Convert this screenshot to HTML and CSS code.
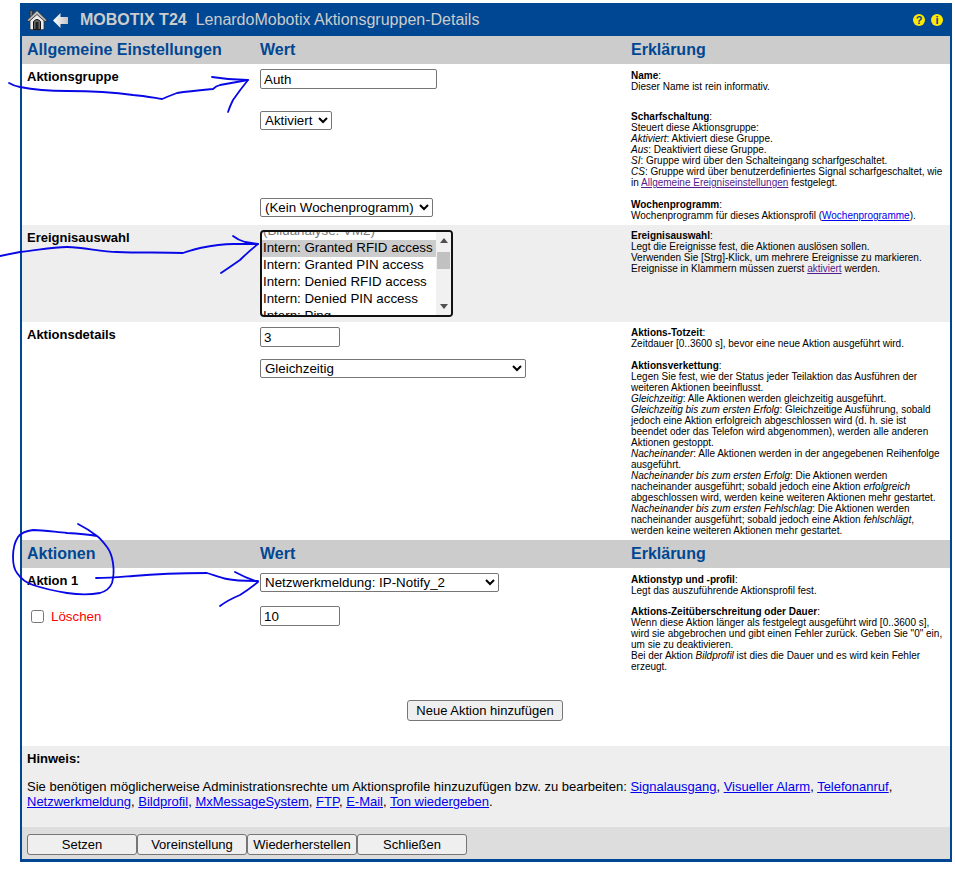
FILE: index.html
```html
<!DOCTYPE html>
<html lang="de">
<head>
<meta charset="utf-8">
<title>MOBOTIX T24 Aktionsgruppen-Details</title>
<link rel="stylesheet" href="styles.css">
</head>
<body>
<div class="page">
  <main class="frame">
    <header class="topbar">
      <svg class="home" viewBox="0 0 22 22" width="22" height="22">
        <rect x="4" y="1.500" width="2.500" height="6" fill="#777" stroke="#222" stroke-width="0.600"/>
        <path d="M4 11 L11 4.500 L18 11 V20.500 Q11 21.500 4 20.500 Z" fill="#ececec" stroke="#333" stroke-width="0.800"/>
        <path d="M0.800 11.500 L11 1.500 L21.200 11.500 L19 12.500 L11 5.500 L3 12.500 Z" fill="#bdbdbd" stroke="#222" stroke-width="0.800"/>
        <path d="M7.500 20.500 V12.500 Q11 8.500 14.500 12.500 V20.500 Z" fill="#666" stroke="#111" stroke-width="1"/>
        <rect x="9.500" y="13" width="3" height="7.500" fill="#222"/>
      </svg>
      <svg class="back" viewBox="0 0 17 17" width="17" height="17">
        <defs><linearGradient id="backfill" x1="0" x2="1" y1="0" y2="0"><stop offset="0" stop-color="#fff"/><stop offset="1" stop-color="#c4c4c4"/></linearGradient></defs>
        <path d="M1 8.500 L8.500 1 V5 H16 V12 H8.500 V16 Z" fill="url(#backfill)"/>
      </svg>
      <span class="brand">MOBOTIX T24</span>
      <span class="pagetitle">LenardoMobotix Aktionsgruppen-Details</span>
      <span class="topicons">
        <span class="badge">?</span>
        <span class="badge">i</span>
      </span>
    </header>

    <div class="row head"><div>Allgemeine Einstellungen</div><div>Wert</div><div>Erklärung</div></div>

    <div class="row r-name">
      <div class="label">Aktionsgruppe</div>
      <div><input class="field f-name" type="text" value="Auth"></div>
      <div class="ex"><b>Name</b>:<br>Dieser Name ist rein informativ.</div>
    </div>
    <div class="row r-arm">
      <div></div>
      <div><select class="field s-arm"><option>Aktiviert</option></select></div>
      <div class="ex"><b>Scharfschaltung</b>:<br>Steuert diese Aktionsgruppe:<br><i>Aktiviert</i>: Aktiviert diese Gruppe.<br><i>Aus</i>: Deaktiviert diese Gruppe.<br><i>SI</i>: Gruppe wird über den Schalteingang scharfgeschaltet.<br><i>CS</i>: Gruppe wird über benutzerdefiniertes Signal scharfgeschaltet, wie in <a class="seen" href="#">Allgemeine Ereigniseinstellungen</a> festgelegt.</div>
    </div>
    <div class="row r-week">
      <div></div>
      <div><select class="field s-week"><option>(Kein Wochenprogramm)</option></select></div>
      <div class="ex"><b>Wochenprogramm</b>:<br>Wochenprogramm für dieses Aktionsprofil (<a href="#">Wochenprogramme</a>).</div>
    </div>

    <div class="row r-events">
      <div class="label">Ereignisauswahl</div>
      <div>
        <div class="listbox">
          <div class="options">
            <div class="opt muted">(Bildanalyse: VM2)</div>
            <div class="opt sel">Intern: Granted RFID access</div>
            <div class="opt">Intern: Granted PIN access</div>
            <div class="opt">Intern: Denied RFID access</div>
            <div class="opt">Intern: Denied PIN access</div>
            <div class="opt">Intern: Ping</div>
          </div>
          <div class="scroll">
            <span class="up"></span>
            <span class="thumb"></span>
            <span class="down"></span>
          </div>
        </div>
      </div>
      <div class="ex"><b>Ereignisauswahl</b>:<br>Legt die Ereignisse fest, die Aktionen auslösen sollen.<br>Verwenden Sie [Strg]-Klick, um mehrere Ereignisse zu markieren.<br>Ereignisse in Klammern müssen zuerst <a class="seen" href="#">aktiviert</a> werden.</div>
    </div>

    <div class="row r-details">
      <div class="label">Aktionsdetails</div>
      <div class="stack">
        <input class="field f-num" type="text" value="3">
        <select class="field s-chain"><option>Gleichzeitig</option></select>
      </div>
      <div class="ex">
        <p><b>Aktions-Totzeit</b>:<br>Zeitdauer [0..3600 s], bevor eine neue Aktion ausgeführt wird.</p>
        <p><b>Aktionsverkettung</b>:<br>Legen Sie fest, wie der Status jeder Teilaktion das Ausführen der weiteren Aktionen beeinflusst.<br><i>Gleichzeitig</i>: Alle Aktionen werden gleichzeitig ausgeführt.<br><i>Gleichzeitig bis zum ersten Erfolg</i>: Gleichzeitige Ausführung, sobald jedoch eine Aktion erfolgreich abgeschlossen wird (d. h. sie ist beendet oder das Telefon wird abgenommen), werden alle anderen Aktionen gestoppt.<br><i>Nacheinander</i>: Alle Aktionen werden in der angegebenen Reihenfolge ausgeführt.<br><i>Nacheinander bis zum ersten Erfolg</i>: Die Aktionen werden nacheinander ausgeführt; sobald jedoch eine Aktion <i>erfolgreich</i> abgeschlossen wird, werden keine weiteren Aktionen mehr gestartet.<br><i>Nacheinander bis zum ersten Fehlschlag</i>: Die Aktionen werden nacheinander ausgeführt; sobald jedoch eine Aktion <i>fehlschlägt</i>, werden keine weiteren Aktionen mehr gestartet.</p>
      </div>
    </div>

    <div class="row head"><div>Aktionen</div><div>Wert</div><div>Erklärung</div></div>

    <div class="row r-action">
      <div class="label">Aktion 1</div>
      <div><select class="field s-action"><option>Netzwerkmeldung: IP-Notify_2</option></select></div>
      <div class="ex"><b>Aktionstyp und -profil</b>:<br>Legt das auszuführende Aktionsprofil fest.</div>
    </div>
    <div class="row r-timeout">
      <label class="delete"><input class="check" type="checkbox"><span>Löschen</span></label>
      <div><input class="field f-num" type="text" value="10"></div>
      <div class="ex"><b>Aktions-Zeitüberschreitung oder Dauer</b>:<br>Wenn diese Aktion länger als festgelegt ausgeführt wird [0..3600 s], wird sie abgebrochen und gibt einen Fehler zurück. Geben Sie "0" ein, um sie zu deaktivieren.<br>Bei der Aktion <i>Bildprofil</i> ist dies die Dauer und es wird kein Fehler erzeugt.</div>
    </div>

    <div class="addrow"><button class="btn add" type="button">Neue Aktion hinzufügen</button></div>

    <section class="note">
      <p class="note-title">Hinweis:</p>
      <p>Sie benötigen möglicherweise Administrationsrechte um Aktionsprofile hinzuzufügen bzw. zu bearbeiten: <a href="#">Signalausgang</a>, <a href="#">Visueller Alarm</a>, <a href="#">Telefonanruf</a>, <a href="#">Netzwerkmeldung</a>, <a href="#">Bildprofil</a>, <a href="#">MxMessageSystem</a>, <a href="#">FTP</a>, <a href="#">E-Mail</a>, <a href="#">Ton wiedergeben</a>.</p>
    </section>

    <footer class="footer">
      <button class="btn foot" type="button">Setzen</button>
      <button class="btn foot" type="button">Voreinstellung</button>
      <button class="btn foot" type="button">Wiederherstellen</button>
      <button class="btn foot" type="button">Schließen</button>
    </footer>
  </main>

  <svg class="ink" viewBox="0 0 955 869" width="955" height="869" fill="none" stroke="#0808e6" stroke-width="1.800" stroke-linecap="round" stroke-linejoin="round">
    <path d="M9 83 Q14 86 20 87 C35 90 50 91 67 91 C90 91 112 92 133 95 C145 96 155 98 162 99 C167 97 171 95 177 93 C190 91 202 90 213 89 Q216 86 220 85 L248 80"/>
    <path d="M212 77 Q230 80 248 80 Q240 90 233 100 Q230 106 228 112"/>
    <path d="M0 256 L20 252 C35 251 50 247 67 247 C85 247 100 252 117 252 C140 253 165 252 183 253 C190 251 195 249 200 248 C215 245 225 244 233 244 L258 244"/>
    <path d="M233 236 Q238 240 245 242 L258 244 Q248 252 240 260 Q230 267 221 273"/>
    <path d="M78 524 Q88 529 97 536 Q85 534 67 533 C55 532 44 530 33 530 C25 531 21 533 18 537 C14 543 13 550 13 557 C13 564 14 569 17 573 C21 579 27 583 33 585 C45 589 55 591 67 593 C80 595 90 595 100 593 C107 591 110 588 112 583 C114 576 114 570 113 563 C112 556 110 551 107 547 C104 543 101 539 97 536"/>
    <path d="M96 578 C110 578 120 577 133 576 C155 574 185 573 207 573 C214 575 220 578 227 579 C236 581 247 581 258 581"/>
    <path d="M235 572 Q246 578 258 582 Q248 590 240 595 Q228 600 220 606"/>
  </svg>
</div>
</body>
</html>
```

FILE: styles.css
```css
* { box-sizing: border-box; }
html, body { margin: 0; padding: 0; background: #fff; }
body { font-family: "Liberation Sans", Arial, sans-serif; color: #000; font-size: 13px; }
.page { position: relative; width: 955px; height: 869px; padding: 3px 0 0 20px; overflow: hidden; }
.frame { width: 932px; height: 859px; border: 2px solid #004793; border-top: 0; border-bottom-width: 3px; display: flex; flex-direction: column; background: #fff; }

.topbar { height: 33px; flex: none; background: #004793; display: flex; align-items: center; padding: 0 7px 0 4px; color: #ccc; }
.home { margin-right: 4px; }
.back { margin: 2px 11px 0 0; }
.brand { font-size: 16px; font-weight: bold; margin-right: 9px; }
.pagetitle { font-size: 16px; }
.topicons { margin-left: auto; display: flex; gap: 6px; }
.badge { width: 12px; height: 12px; border-radius: 50%; background: #ffe800; color: #004793; font-size: 11px; font-weight: bold; line-height: 12px; text-align: center; }

.row { display: grid; grid-template-columns: 233px 371px 1fr; padding-left: 5px; flex: none; }
.head { height: 28px; background: #ccc; color: #004793; font-size: 16px; font-weight: bold; line-height: 27px; }
.label { font-size: 13px; font-weight: bold; line-height: 15px; }
.ex { font-size: 10px; line-height: 11px; padding-right: 5px; }
.ex p { margin: 0 0 11px; }
.ex p:last-child { margin: 0; }
a { color: #0000ee; }
a.seen { color: #551a8b; }

.r-name { height: 41px; padding-top: 5px; }
.r-arm { height: 88px; padding-top: 6px; }
.r-week { height: 32px; padding-top: 5px; }
.r-events { height: 97px; padding-top: 5px; background: #eee; }
.r-details { height: 218px; padding-top: 5px; }
.r-action { height: 38px; padding-top: 5px; }
.r-timeout { height: 94px; padding-top: 0; }
.r-name .ex, .r-week .ex, .r-action .ex { padding-top: 1px; }

.field { display: block; font-family: "Liberation Sans", Arial, sans-serif; font-size: 13.33px; color: #000; background: #fff; border: 1px solid #767676; border-radius: 2px; height: 20px; padding: 0 3px; outline: 0; }
.f-name { width: 177px; }
.f-num { width: 80px; }
select.field { height: 19px; padding: 0; }
.s-arm { width: 72px; }
.s-week { width: 173px; }
.s-chain { width: 266px; }
.s-action { width: 239px; }
.stack { display: flex; flex-direction: column; gap: 12px; }

.listbox { width: 193px; height: 87px; border: 2px solid #111; border-radius: 4px; display: flex; background: #fff; overflow: hidden; }
.options { width: 174px; overflow: hidden; flex: none; }
.opt { height: 17px; line-height: 15px; padding-left: 1px; font-size: 13.33px; white-space: nowrap; }
.opt:first-child { margin-top: -9px; }
.opt.muted { color: #777; }
.opt.sel { background: #ccc; }
.scroll { flex: 1; background: #f1f1f1; display: flex; flex-direction: column; align-items: center; }
.up { width: 0; height: 0; margin-top: 6px; border: 4px solid transparent; border-top: 0; border-bottom: 5px solid #505050; }
.thumb { width: 13px; height: 17px; background: #c1c1c1; margin-top: 9px; }
.down { width: 0; height: 0; margin-top: auto; margin-bottom: 6px; border: 4px solid transparent; border-bottom: 0; border-top: 5px solid #505050; }

.delete { display: flex; align-items: center; height: 20px; padding-left: 4px; gap: 7px; color: #f00; font-size: 13.33px; }
.check { margin: 0; width: 13px; height: 13px; }

.addrow { flex: 1; display: flex; justify-content: center; padding: 0 2px 0 0; background: #fff; }
.btn { font-family: "Liberation Sans", Arial, sans-serif; font-size: 13px; color: #000; background: #efefef; border: 1px solid #767676; border-radius: 3px; height: 21px; padding: 0; }
.add { width: 156px; }

.note { height: 81px; flex: none; background: #eee; padding: 5px; font-size: 13px; line-height: 15px; }
.note p { margin: 0; }
.note .note-title { font-weight: bold; margin-bottom: 13px; }

.footer { height: 32px; flex: none; background: #ddd; padding: 7px 5px 0; display: flex; }
.foot { width: 110px; }

.ink { position: absolute; left: 0; top: 0; pointer-events: none; }
```
